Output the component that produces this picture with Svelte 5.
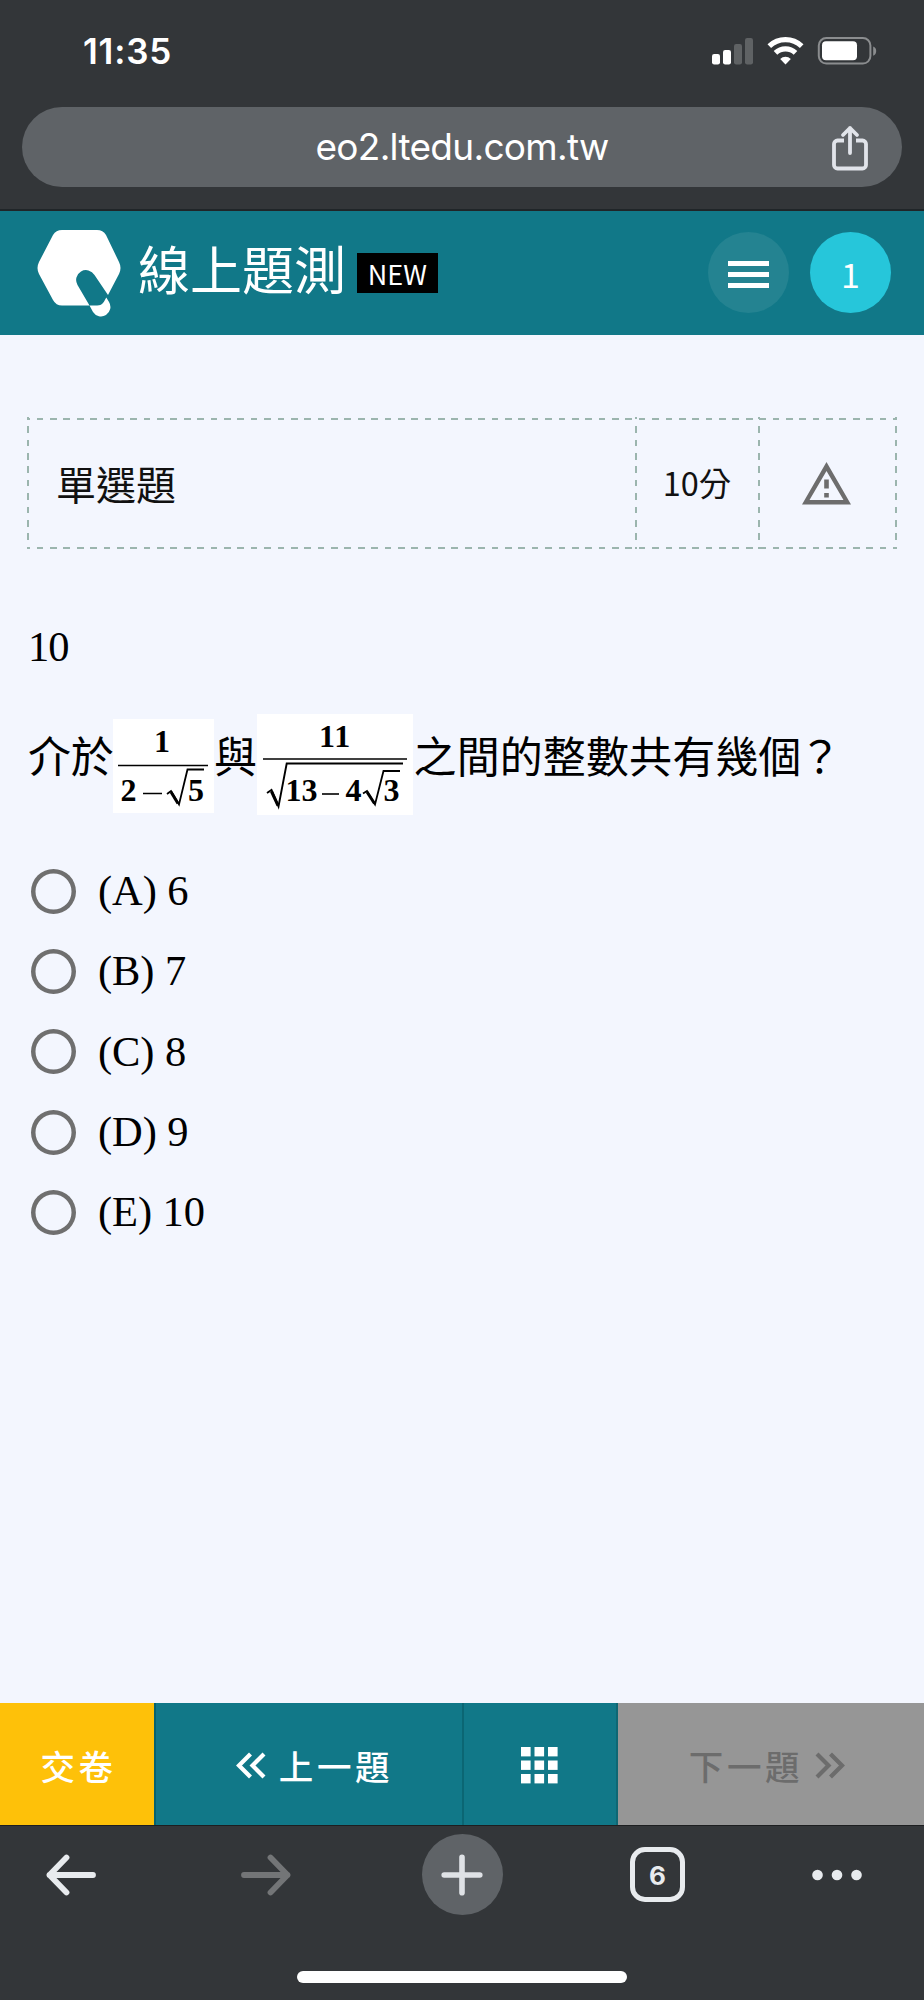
<script>
  const options = [
    { key: 'A', value: '6' },
    { key: 'B', value: '7' },
    { key: 'C', value: '8' },
    { key: 'D', value: '9' },
    { key: 'E', value: '10' }
  ];
  let chosen = $state('');
</script>

<div class="screen">
  <div class="browser-top">
    <div class="status">
      <span class="clock">11:35</span>
      <svg class="signals" width="166" height="30" viewBox="0 0 166 30">
        <g fill="#fff">
          <rect x="0" y="17" width="8" height="10.5" rx="2.2" />
          <rect x="11" y="13" width="8" height="14.5" rx="2.2" />
          <rect x="22" y="7" width="8" height="20.5" rx="2.2" opacity=".22" />
          <rect x="33" y="1" width="8" height="26.5" rx="2.2" opacity=".22" />
        </g>
        <g fill="none" stroke="#fff" stroke-width="5.2">
          <path d="M57.3 9.2a23.5 23.5 0 0 1 32.4 0" />
          <path d="M63.5 15.8a14.5 14.5 0 0 1 20 0" />
        </g>
        <path d="M73.5 27.4l-5.3-5.5a7.8 7.8 0 0 1 10.6 0z" fill="#fff" />
        <rect x="106.8" y="1" width="51.6" height="25.6" rx="7.5" fill="none" stroke="#8b8d8f" stroke-width="2" />
        <rect x="110" y="4.3" width="35" height="19" rx="4" fill="#fff" />
        <path d="M161.2 9.5c4 1 4 8.200 0 9.200z" fill="#8b8d8f" />
      </svg>
    </div>
    <div class="address">
      <span class="url">eo2.ltedu.com.tw</span>
      <svg class="share" width="38" height="46" viewBox="0 0 38 46" fill="none" stroke="#e1e4ea" stroke-width="3.8" stroke-linecap="round" stroke-linejoin="round">
        <path d="M13 15.500H6.500a3.500 3.500 0 0 0-3.500 3.500v21a3.500 3.500 0 0 0 3.500 3.500h25a3.500 3.500 0 0 0 3.500-3.500V19a3.500 3.500 0 0 0-3.500-3.500H25" stroke-linecap="butt" />
        <path d="M19 28V3M12 10l7-7 7 7" />
      </svg>
    </div>
  </div>

  <header>
    <svg class="logo" width="86" height="90" viewBox="0 0 86 90">
      <path fill="#fff" d="M25 1H60Q66 1 69 6L82 33Q85 39 82 45L71 66L57.500 46A9.800 9.800 0 0 0 40.500 56L52.500 76.500H25Q19 76.500 16 71L2 45Q-1 39 2 33L16 6Q19 1 25 1Z" />
      <path fill="#fff" d="M52.500 76.500H60Q64.500 76.500 66.800 73L69.300 68.500 72 73A9.300 9.300 0 0 1 56 83Z" />
    </svg>
    <h1>線上題測</h1>
    <span class="new">NEW</span>
    <button class="round menu" aria-label="選單"><i></i><i></i><i></i></button>
    <span class="round avatar">1</span>
  </header>

  <main>
    <section class="info">
      <div class="kind">單選題</div>
      <div class="score">10分</div>
      <div class="report">
        <svg width="49" height="43" viewBox="0 0 49 43">
          <path fill="#6d6d6d" fill-rule="evenodd" d="M24.500 0L49 42.500H0ZM24.500 9L7.500 38H41.500ZM22.200 17.500h4.600v9h-4.600zM22.200 31h4.600v4.500h-4.600z" />
        </svg>
      </div>
    </section>

    <p class="number">10</p>

    <div class="question">
      <span>介於</span>
      <svg class="frac first" width="101" height="94" viewBox="0 0 101 94">
        <rect width="101" height="94" fill="#fff" />
        <text x="41" y="33">1</text>
        <path d="M5 46.500H95M30 74.500H49" stroke-width="1.600" />
        <text x="7.500" y="82">2</text>
        <path d="M54 75l4-3 8 13.500 8.500-35H91" stroke-width="1.800" />
        <path d="M58 73l7 11.500" stroke-width="3" />
        <text x="75" y="82">5</text>
      </svg>
      <span>與</span>
      <svg class="frac second" width="156" height="101" viewBox="0 0 156 101">
        <rect width="156" height="101" fill="#fff" />
        <text x="62" y="33" letter-spacing="1">11</text>
        <path d="M6 45H150" stroke-width="1.600" />
        <path d="M10 79l4.500-3 7 16.500 8.200-43H146" stroke-width="1.900" />
        <path d="M14.500 77.500l6.500 14" stroke-width="3" />
        <text x="28.500" y="87.300">13</text>
        <path d="M65 80H82" stroke-width="1.600" />
        <text x="88.500" y="87.300">4</text>
        <path d="M106 79.500l4-2.500 8 13.500 8.500-33.500H143" stroke-width="1.800" />
        <path d="M110 78l7.500 11.500" stroke-width="3" />
        <text x="126.500" y="87.300">3</text>
      </svg>
      <span>之間的整數共有幾個<b>？</b></span>
    </div>

    <div class="options">
      {#each options as option}
        <label>
          <input type="radio" name="answer" value={option.key} bind:group={chosen} />
          <span>({option.key}) {option.value}</span>
        </label>
      {/each}
    </div>
  </main>

  <nav class="actions">
    <button class="submit">交卷</button>
    <button class="prev">
      <svg width="30" height="28" viewBox="0 0 30 28" fill="none" stroke="#fff" stroke-width="4.200"><path d="M14.500 2L3 13.500 14.500 25M28 2L16.500 13.500 28 25" /></svg>
      <span>上一題</span>
    </button>
    <button class="grid" aria-label="題目列表">
      <svg width="37" height="37" viewBox="0 0 37 37" fill="#fff">
        {#each [0, 13.5, 27] as y}
          {#each [0, 13.5, 27] as x}
            <rect {x} {y} width="9.600" height="9.400" />
          {/each}
        {/each}
      </svg>
    </button>
    <button class="next" disabled>
      <span>下一題</span>
      <svg width="30" height="28" viewBox="0 0 30 28" fill="none" stroke="#6c6c6c" stroke-width="4.200"><path d="M2 2l11.500 11.500L2 25M15.500 2L27 13.500 15.500 25" /></svg>
    </button>
  </nav>

  <div class="browser-bottom">
    <div class="tools">
      <svg width="50" height="42" viewBox="0 0 50 42" fill="none" stroke="#e8ebee" stroke-width="5.800" stroke-linecap="round" stroke-linejoin="round"><path d="M47 21H3.500M20.500 3.500L3.500 21l17 17.500" /></svg>
      <svg width="50" height="42" viewBox="0 0 50 42" fill="none" stroke="#737577" stroke-width="5.800" stroke-linecap="round" stroke-linejoin="round"><path d="M3 21H46.500M29.500 3.500l17 17.500-17 17.500" /></svg>
      <span class="plus"><svg width="42" height="42" viewBox="0 0 42 42" stroke="#dfe2e6" stroke-width="5.600" stroke-linecap="round"><path d="M21 3.200V38.800M3.200 21H38.800" /></svg></span>
      <span class="tabs">6</span>
      <svg width="50" height="12" viewBox="0 0 50 12" fill="#e8ebee"><circle cx="5.500" cy="6" r="5.300" /><circle cx="25" cy="6" r="5.300" /><circle cx="44.500" cy="6" r="5.300" /></svg>
    </div>
    <div class="home"></div>
  </div>
</div>

<style>
  :global(body) {
    margin: 0;
  }
  .screen {
    width: 924px;
    height: 2000px;
    display: flex;
    flex-direction: column;
    overflow: hidden;
    background: #f3f6fe;
    font-family: 'Noto Sans CJK TC', sans-serif;
    color: #111;
  }
  .screen * {
    box-sizing: border-box;
  }
  button {
    border: 0;
    margin: 0;
    padding: 0;
    font: inherit;
    letter-spacing: inherit;
    color: inherit;
  }
  svg {
    display: block;
    flex: none;
  }

  .browser-top {
    height: 211px;
    flex: none;
    background: #333639;
    border-bottom: 2px solid #202528;
    font-family: Inter, sans-serif;
    color: #fff;
  }
  .status {
    height: 107px;
    padding: 0 46px 4px 83px;
    display: flex;
    align-items: center;
    justify-content: space-between;
  }
  .clock {
    font-size: 35px;
    font-weight: 600;
    line-height: 1;
    letter-spacing: 0.8px;
  }
  .address {
    height: 80px;
    margin: 0 22px;
    padding: 0 33px;
    border-radius: 40px;
    background: #5f6367;
    display: grid;
    grid-template-columns: 38px 1fr 38px;
    align-items: center;
  }
  .url {
    grid-column: 2;
    margin-top: -2px;
    text-align: center;
    font-size: 37px;
    letter-spacing: -0.700px;
    white-space: nowrap;
  }
  .share {
    margin-top: 2px;
  }

  header {
    height: 124px;
    flex: none;
    background: #117888;
    color: #fff;
    display: flex;
    align-items: center;
    padding: 0 33px 0 36.500px;
  }
  .logo {
    margin-top: 2px;
  }
  h1 {
    margin: -11px 0 0 15.500px;
    font-size: 52px;
    font-weight: 400;
    line-height: 60px;
    letter-spacing: 0;
  }
  .new {
    margin: 0 auto 0 10.800px;
    width: 81px;
    height: 40px;
    line-height: 41px;
    text-align: center;
    background: #000;
    font-size: 27px;
  }
  .round {
    width: 81px;
    height: 81px;
    margin-top: -2px;
    border-radius: 50%;
    display: flex;
    align-items: center;
    justify-content: center;
  }
  .menu {
    flex-direction: column;
    gap: 6px;
    padding-top: 5px;
    background: #248391;
    margin-right: 21.500px;
  }
  .menu i {
    width: 41px;
    height: 5px;
    background: #fff;
  }
  .avatar {
    background: #26c6da;
    font-size: 34px;
    line-height: 1;
    padding-top: 3px;
  }

  main {
    flex: 1;
    padding: 82px 27px 0;
  }
  .info {
    --dash: #9bb5ae;
    height: 132px;
    width: 870px;
    display: grid;
    grid-template-columns: 608px 123px 1fr;
    background:
      repeating-linear-gradient(90deg, var(--dash) 0 6.700px, transparent 6.700px 13.380px) -3.700px 0.500px / 876px 2px no-repeat,
      repeating-linear-gradient(90deg, var(--dash) 0 6.700px, transparent 6.700px 13.380px) -3.700px 100% / 876px 2px no-repeat,
      repeating-linear-gradient(180deg, var(--dash) 0 6.700px, transparent 6.700px 13.400px) 0 -4.300px / 2px 138px no-repeat,
      repeating-linear-gradient(180deg, var(--dash) 0 6.700px, transparent 6.700px 13.400px) 100% -4.300px / 2px 138px no-repeat;
  }
  .info > div {
    display: flex;
    align-items: center;
  }
  .score,
  .report {
    justify-content: center;
    background: repeating-linear-gradient(180deg, var(--dash) 0 6.700px, transparent 6.700px 13.400px) 0 -4.300px / 2px 140px no-repeat;
  }
  .report {
    padding-right: 3px;
  }
  .kind {
    padding: 0 0 0 29px;
    font-size: 40px;
  }
  .score {
    padding: 0 0 3px 1px;
    font-size: 32.500px;
  }

  .number {
    margin: 72px 0 0 1px;
    font: 42.500px/52px 'Liberation Serif', serif;
    letter-spacing: -1px;
    color: #000;
  }
  .question {
    height: 101px;
    margin-top: 41px;
    padding-left: 1px;
    display: flex;
    align-items: flex-start;
    font-size: 43px;
    line-height: 50px;
    color: #000;
    white-space: nowrap;
  }
  .question span {
    padding-top: 15px;
    letter-spacing: -0.300px;
  }
  .question span:last-child {
    letter-spacing: 0.100px;
  }
  .question b {
    font-weight: 400;
    margin-left: -3px;
  }
  .frac text {
    font: bold 32px 'Liberation Serif', serif;
    fill: #000;
  }
  .frac path {
    fill: none;
    stroke: #000;
  }
  .first {
    margin: 5px 0 0 -0.400px;
  }
  .second {
    margin-right: 1px;
    margin-left: -0.200px;
  }

  .options {
    margin-top: 36px;
    display: flex;
    flex-direction: column;
  }
  label {
    height: 80.300px;
    display: flex;
    align-items: center;
    gap: 22px;
    padding-left: 4px;
    font: 42.500px/50px 'Liberation Serif', serif;
    letter-spacing: -0.100px;
    color: #000;
  }
  input {
    appearance: none;
    flex: none;
    width: 45px;
    height: 45px;
    margin: 0;
    box-shadow: inset 0 0 0 4.500px #6f6f6f;
    border-radius: 50%;
  }
  input:checked {
    background: radial-gradient(circle, #117888 45%, transparent 48%);
  }

  .actions {
    height: 122px;
    flex: none;
    display: grid;
    grid-template-columns: 154px 308px 156px 306px;
    color: #fff;
    font-size: 34.500px;
    font-weight: 500;
    letter-spacing: 3.600px;
    line-height: 50px;
  }
  .actions button {
    display: flex;
    align-items: center;
    justify-content: center;
    background: #117888;
  }
  .actions span,
  .actions .submit {
    padding-top: 2px;
  }
  .prev svg,
  .next svg {
    margin-top: 3px;
  }
  .actions .submit {
    background: #fec109;
    padding-left: 3px;
  }
  .actions .prev {
    border-left: 2px solid #06626f;
    gap: 13px;
    padding-left: 11px;
  }
  .actions .grid {
    border-left: 2px solid #0b6673;
    border-right: 2px solid #0e6773;
    padding: 2px 2px 0 0;
  }
  .actions .next {
    background: #969696;
    color: #6c6c6c;
    gap: 12px;
    padding-right: 8px;
  }

  .browser-bottom {
    height: 175px;
    flex: none;
    background: #333639;
    border-top: 1px solid #1d1f21;
    display: flex;
    flex-direction: column;
    align-items: center;
  }
  .tools {
    width: 100%;
    height: 97px;
    display: grid;
    grid-template-columns: 141px 250px 142px 249px 109px;
    align-items: center;
    justify-items: center;
  }
  .plus {
    width: 81px;
    height: 81px;
    border-radius: 50%;
    background: #5f6367;
    display: flex;
    align-items: center;
    justify-content: center;
  }
  .tabs {
    width: 55px;
    height: 55px;
    border: 5px solid #e8ebee;
    border-radius: 15px;
    display: flex;
    align-items: center;
    justify-content: center;
    font: 700 26px/1 Inter, sans-serif;
    color: #e8ebee;
    padding-top: 2px;
  }
  .home {
    width: 330px;
    height: 12px;
    margin-top: 48px;
    border-radius: 6px;
    background: #fff;
  }
</style>
